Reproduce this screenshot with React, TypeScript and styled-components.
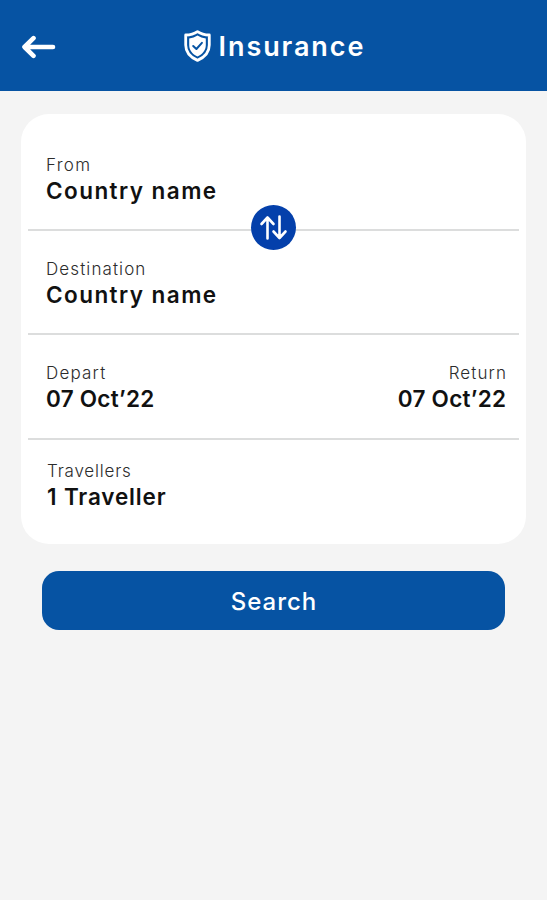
import React from "react";
import styled, { createGlobalStyle } from "styled-components";

const GlobalStyle = createGlobalStyle`
  * { box-sizing: border-box; }
  body { margin: 0; background: #f4f4f4; font-family: Inter, "Open Sans", sans-serif; }
`;

const Screen = styled.div`
  min-height: 900px;
  background: #f4f4f4;
`;

const Header = styled.header`
  height: 91px;
  padding: 2px 21px 0;
  display: grid;
  grid-template-columns: 36px 1fr 36px;
  align-items: center;
  background: #0653a3;
  color: #fff;
`;

const BackButton = styled.button`
  border: 0;
  padding: 0;
  background: none;
  color: inherit;
  display: flex;
`;

const Title = styled.h1`
  margin: 0;
  display: flex;
  align-items: center;
  justify-content: center;
  gap: 8px;
  font-size: 27px;
  line-height: 36px;
  font-weight: 600;

  svg {
    margin-bottom: 2px;
  }
`;

const Tracked = styled.span<{ $tracking: number }>`
  letter-spacing: ${(p) => p.$tracking}px;
  margin-right: ${(p) => -p.$tracking}px;
  white-space: nowrap;
`;

const Card = styled.main`
  margin: 23px 21px 0;
  height: 430px;
  padding: 0 7px;
  border-radius: 28px;
  background: #fff;
`;

const Row = styled.section<{ $height: number; $top: number; $last?: boolean }>`
  position: relative;
  height: ${(p) => p.$height}px;
  padding: ${(p) => p.$top}px 13px 0 18px;
  display: flex;
  justify-content: space-between;
  border-bottom: ${(p) => (p.$last ? "0" : "2px solid #dcdddd")};
`;

const Field = styled.div<{ $end?: boolean; $shift?: boolean }>`
  display: flex;
  flex-direction: column;
  align-items: ${(p) => (p.$end ? "flex-end" : "flex-start")};
  padding-left: ${(p) => (p.$shift ? 1 : 0)}px;
`;

const Label = styled.div`
  font-size: 17px;
  line-height: 27px;
  font-weight: 300;
  color: #2c2c2c;
`;

const Value = styled.div`
  font-size: 22.5px;
  line-height: 24px;
  font-weight: 600;
  color: #111;
`;

const SwapButton = styled.button`
  position: absolute;
  left: 223px;
  bottom: -21px;
  width: 45px;
  height: 45px;
  border: 0;
  border-radius: 50%;
  padding: 0;
  background: #0440ab;
  color: #fff;
  display: flex;
`;

const SearchButton = styled.button`
  display: flex;
  align-items: center;
  justify-content: center;
  width: 463px;
  height: 59px;
  margin: 27px 0 0 42px;
  padding: 2px 0 0;
  border: 0;
  border-radius: 17px;
  background: #0653a3;
  color: #fff;
  font: 500 24px/36px Inter, sans-serif;
`;

const BackIcon = () => (
  <svg width="36" height="24" viewBox="0 0 36 24" fill="none" stroke="currentColor" strokeWidth="4.6" strokeLinecap="round" strokeLinejoin="round">
    <path d="M12.5 3.2 3.5 12l9 8.8M4 12h28" />
  </svg>
);

const ShieldIcon = () => (
  <svg width="27" height="32" viewBox="0 0 27 32" fill="none" strokeLinecap="round" strokeLinejoin="round">
    <path d="M13.5 1.6C10.4 3.8 6.3 5 1.7 5V15c0 7 4.7 12.3 11.8 15.4C20.6 27.3 25.3 22 25.3 15V5C20.7 5 16.6 3.8 13.5 1.6Z" stroke="currentColor" strokeWidth="2.8" />
    <path d="M13.5 5.6C11 7.2 8.3 8.2 5.2 8.5V15c0 5.2 3.2 9.1 8.3 11.6 5.1-2.5 8.3-6.4 8.3-11.6V8.5C18.7 8.2 16 7.2 13.5 5.6Z" fill="currentColor" />
    <path d="m9.2 16 3.2 3 5.5-6.2" stroke="#0653a3" strokeWidth="2" />
  </svg>
);

const SwapIcon = () => (
  <svg width="45" height="45" viewBox="0 0 45 45" fill="none" stroke="currentColor" strokeWidth="2.6" strokeLinecap="round" strokeLinejoin="round">
    <path d="M16.5 33.5V12.5M10.5 19l6-6.5 6 6.5M28.5 11.5v21M22.5 26.500l6 6.500 6-6.500" />
  </svg>
);

type EntryProps = {
  label: string;
  value: string;
  labelTracking: number;
  valueTracking: number;
  end?: boolean;
  shift?: boolean;
};

const Entry = ({ label, value, labelTracking, valueTracking, end, shift }: EntryProps) => (
  <Field $end={end} $shift={shift}>
    <Label><Tracked $tracking={labelTracking}>{label}</Tracked></Label>
    <Value><Tracked $tracking={valueTracking}>{value}</Tracked></Value>
  </Field>
);

export default function App() {
  return (
    <>
      <GlobalStyle />
      <Screen>
        <Header>
          <BackButton aria-label="Back"><BackIcon /></BackButton>
          <Title>
            <ShieldIcon />
            <Tracked $tracking={1.9}>Insurance</Tracked>
          </Title>
        </Header>
        <Card>
          <Row $height={117} $top={38}>
            <Entry label="From" value="Country name" labelTracking={1.3} valueTracking={1.45} />
            <SwapButton aria-label="Swap countries"><SwapIcon /></SwapButton>
          </Row>
          <Row $height={104} $top={25}>
            <Entry label="Destination" value="Country name" labelTracking={1.1} valueTracking={1.45} />
          </Row>
          <Row $height={105} $top={25}>
            <Entry label="Depart" value="07 Oct’22" labelTracking={1.2} valueTracking={0.25} />
            <Entry label="Return" value="07 Oct’22" labelTracking={1.1} valueTracking={0.25} end />
          </Row>
          <Row $height={104} $top={18} $last>
            <Entry label="Travellers" value="1 Traveller" labelTracking={0.8} valueTracking={0.85} shift />
          </Row>
        </Card>
        <SearchButton><Tracked $tracking={1}>Search</Tracked></SearchButton>
      </Screen>
    </>
  );
}
